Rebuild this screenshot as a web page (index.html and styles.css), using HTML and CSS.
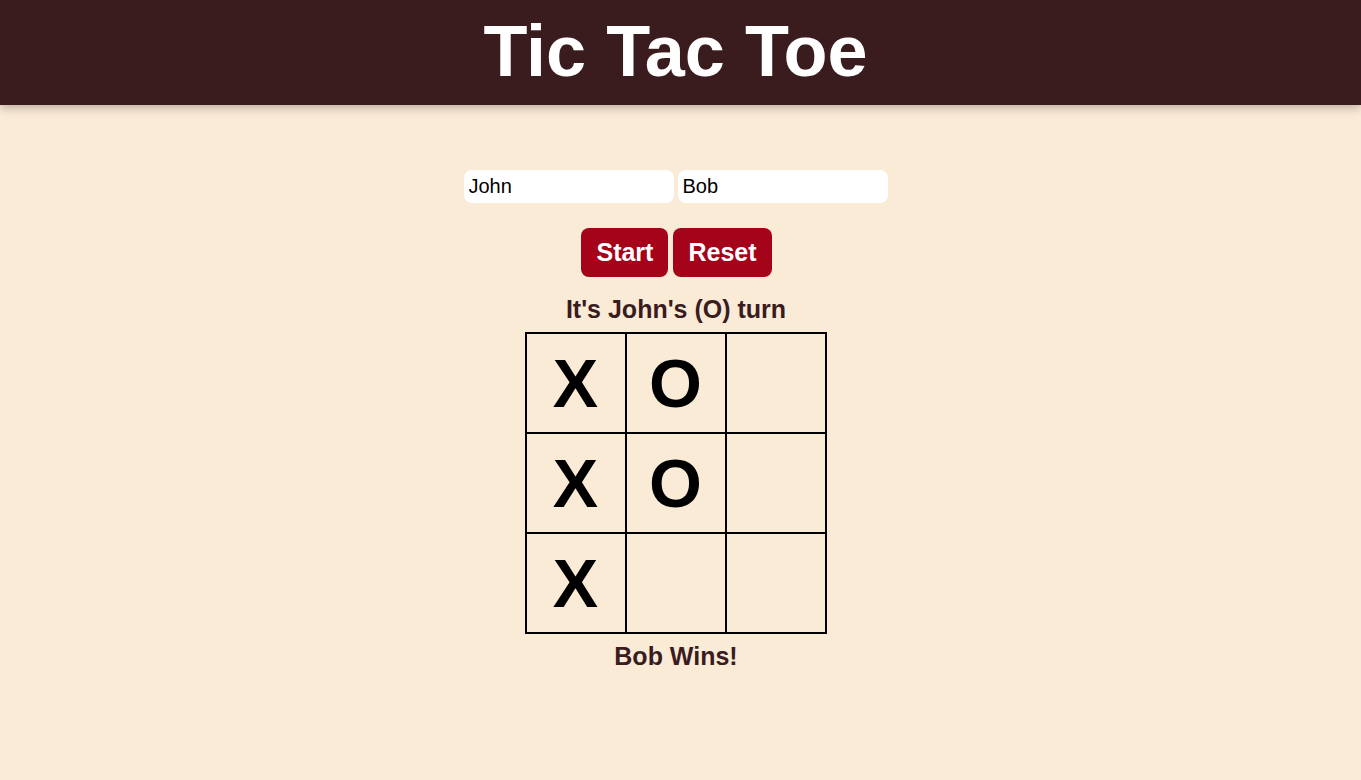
FILE: index.html
```html
<!DOCTYPE html>
<html lang="en">
<head>
<meta charset="utf-8">
<title>Tic Tac Toe</title>
<link rel="stylesheet" href="styles.css">
</head>
<body>
<header class="topbar">
  <h1 class="title">Tic Tac Toe</h1>
</header>
<main class="game">
  <div class="players">
    <input class="player-input" type="text" value="John">
    <input class="player-input" type="text" value="Bob">
  </div>
  <div class="controls">
    <button class="btn">Start</button>
    <button class="btn">Reset</button>
  </div>
  <p class="status">It's John's (O) turn</p>
  <div class="board">
    <div class="cell">X</div>
    <div class="cell">O</div>
    <div class="cell"></div>
    <div class="cell">X</div>
    <div class="cell">O</div>
    <div class="cell"></div>
    <div class="cell">X</div>
    <div class="cell"></div>
    <div class="cell"></div>
  </div>
  <p class="result">Bob Wins!</p>
</main>
</body>
</html>
```

FILE: styles.css
```css
* { box-sizing: border-box; }

html, body {
  margin: 0;
  padding: 0;
}

body {
  background: #faebd7;
  font-family: "Liberation Sans", Arial, sans-serif;
  color: #3a1c1f;
  min-height: 780px;
}

.topbar {
  height: 105px;
  padding-right: 10px;
  padding-bottom: 3px;
  background: #3a1c1f;
  display: flex;
  align-items: center;
  justify-content: center;
  box-shadow: 0 2px 10px rgba(58, 28, 31, 0.35);
}

.title {
  margin: 0;
  color: #ffffff;
  font-size: 72px;
  font-weight: bold;
  line-height: 1;
}

.game {
  display: flex;
  flex-direction: column;
  align-items: center;
  padding-top: 65px;
  padding-right: 10px;
}

.players {
  display: flex;
  gap: 4px;
}

.player-input {
  width: 210px;
  height: 33px;
  border: none;
  border-radius: 8px;
  background: #ffffff;
  padding: 0 5px;
  font-family: "Liberation Sans", Arial, sans-serif;
  font-size: 20px;
  color: #000000;
  outline: none;
}

.controls {
  display: flex;
  gap: 5px;
  margin-top: 25px;
  padding-left: 2px;
}

.btn {
  height: 49px;
  padding: 0 15px;
  border: none;
  border-radius: 8px;
  background: #a4031a;
  color: #ffffff;
  font-family: "Liberation Sans", Arial, sans-serif;
  font-size: 25px;
  font-weight: bold;
}

.status {
  margin: 18px 0 0;
  padding-left: 1px;
  font-size: 25px;
  font-weight: bold;
  color: #3a1c1f;
}

.board {
  margin-top: 8px;
  display: grid;
  grid-template-columns: repeat(3, 100px);
  grid-template-rows: repeat(3, 100px);
  border: 1px solid #000000;
}

.cell {
  border: 1px solid #000000;
  display: flex;
  align-items: center;
  justify-content: center;
  font-size: 68px;
  font-weight: bold;
  color: #000000;
  line-height: 1;
}

.result {
  margin: 8px 0 0;
  padding-left: 1px;
  font-size: 25px;
  font-weight: bold;
  color: #3a1c1f;
}
```
